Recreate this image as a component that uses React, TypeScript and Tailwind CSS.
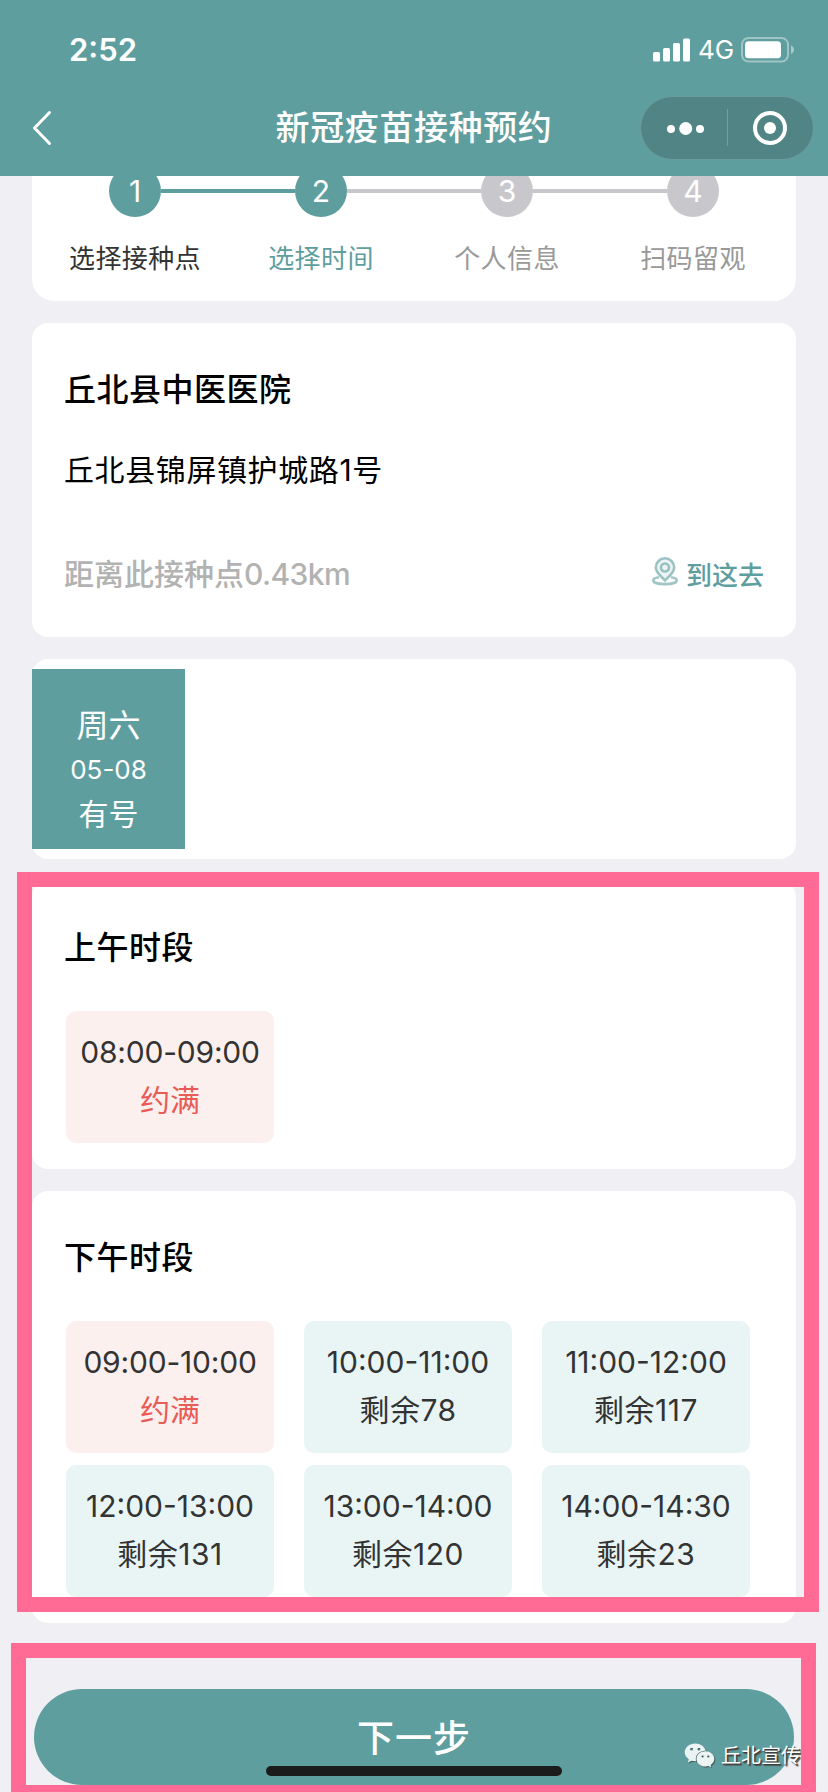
import React from 'react';
import clsx from 'clsx';
import { FaWeixin } from 'react-icons/fa';

interface Step {
  id: number;
  label: string;
}

interface Slot {
  time: string;
  left: number;
}

const CURRENT_STEP = 2;

const steps: Step[] = [
  { id: 1, label: '选择接种点' },
  { id: 2, label: '选择时间' },
  { id: 3, label: '个人信息' },
  { id: 4, label: '扫码留观' },
];

const morning: Slot[] = [{ time: '08:00-09:00', left: 0 }];

const afternoon: Slot[] = [
  { time: '09:00-10:00', left: 0 },
  { time: '10:00-11:00', left: 78 },
  { time: '11:00-12:00', left: 117 },
  { time: '12:00-13:00', left: 131 },
  { time: '13:00-14:00', left: 120 },
  { time: '14:00-14:30', left: 23 },
];

const StatusBar: React.FC = () => (
  <div className="flex h-[80px] items-center justify-between pt-[20px] pl-[69px] pr-[34px]">
    <span className="text-[31px] leading-[40px] font-semibold">2:52</span>
    <div className="flex items-center">
      <svg width="37" height="24" viewBox="0 0 37 24" fill="currentColor">
        <rect x="0" y="14" width="7" height="9.5" rx="1.6" />
        <rect x="10" y="10" width="7" height="13.5" rx="1.6" />
        <rect x="20" y="5" width="7" height="18.5" rx="1.6" />
        <rect x="30" y="0.5" width="7" height="23" rx="1.6" />
      </svg>
      <span className="ml-[8px] w-[35px] text-[26px] leading-[40px]">4G</span>
      <svg className="ml-[8px]" width="53" height="26" viewBox="0 0 53 26">
        <rect x="1" y="1" width="46" height="23.5" rx="6.5" fill="none" stroke="#fff" strokeOpacity="0.4" strokeWidth="2" />
        <rect x="4" y="4.3" width="36" height="17" rx="3.5" fill="#fff" />
        <path d="M50 8.5c1.8.6 3 2.200 3 4.200s-1.200 3.600-3 4.200z" fill="#fff" fillOpacity="0.45" />
      </svg>
    </div>
  </div>
);

const Header: React.FC = () => (
  <header className="h-[176px] bg-[#5f9e9f] text-white">
    <StatusBar />
    <div className="grid h-[96px] grid-cols-[240px_1fr_240px] items-center pr-[14px]">
      <svg className="ml-[32px]" width="20" height="36" viewBox="0 0 20 36" fill="none" stroke="currentColor" strokeWidth="3" strokeLinecap="round" strokeLinejoin="round">
        <path d="M17.500 2.500L2.500 18l15 15.500" />
      </svg>
      <h1 className="ml-[14px] text-center text-[34px] leading-[48px] font-medium tracking-[0.6px] whitespace-nowrap">新冠疫苗接种预约</h1>
      <div className="flex h-[64px] w-[174px] items-center justify-self-end rounded-full border border-[#6b9c9c] bg-[#518585]">
        <svg width="172" height="62" viewBox="0 0 172 62">
          <circle cx="30" cy="32" r="4" fill="#fff" />
          <circle cx="44.700" cy="31.500" r="6.500" fill="#fff" />
          <circle cx="59" cy="32" r="4" fill="#fff" />
          <rect x="86" y="12" width="1" height="37" fill="#759f9f" />
          <circle cx="129" cy="31" r="15" fill="none" stroke="#fff" strokeWidth="4" />
          <circle cx="129" cy="31" r="6" fill="#fff" />
        </svg>
      </div>
    </div>
  </header>
);

const StepBar: React.FC = () => (
  <section className="h-[125px] overflow-hidden rounded-b-[22px] bg-white px-[10px]">
    <div className="-mt-[11px] grid grid-cols-4">
      {steps.map((step, i) => (
        <div key={step.id} className="flex flex-col items-center">
          <div className="flex w-full items-center">
            <div className={clsx('h-[4px] flex-1', i > 0 && (step.id <= CURRENT_STEP ? 'bg-[#5f9e9f]' : 'bg-[#c8c7cc]'))} />
            <div
              className={clsx(
                'flex size-[52px] items-center justify-center rounded-full text-[30px] leading-[24px] text-white',
                step.id <= CURRENT_STEP ? 'bg-[#5f9e9f]' : 'bg-[#c8c7cc]'
              )}
            >
              {step.id}
            </div>
            <div className={clsx('h-[4px] flex-1', i < steps.length - 1 && (step.id < CURRENT_STEP ? 'bg-[#5f9e9f]' : 'bg-[#c8c7cc]'))} />
          </div>
          <p
            className={clsx(
              'mt-[22px] text-[26px] leading-[40px] tracking-[0.4px]',
              step.id < CURRENT_STEP && 'text-[#333]',
              step.id === CURRENT_STEP && 'text-[#5f9e9f]',
              step.id > CURRENT_STEP && 'text-[#999]'
            )}
          >
            {step.label}
          </p>
        </div>
      ))}
    </div>
  </section>
);

const PinIcon: React.FC = () => (
  <svg width="26" height="29" viewBox="0 0 26 29" fill="none" stroke="#5f9e9f" strokeOpacity="0.6" strokeWidth="2.6">
    <path d="M13 23.500C10 20 3.800 16 3.800 10.500a9.200 9.200 0 0 1 18.400 0C22.200 16 16 20 13 23.500z" fill="#5f9e9f" fillOpacity="0.12" />
    <circle cx="13" cy="10.500" r="4" />
    <path d="M7 20.300c-3.600.5-5.700 1.700-5.700 3.100 0 2 4.700 3.700 11.700 3.700s11.700-1.700 11.700-3.700c0-1.400-2.100-2.600-5.700-3.100" />
  </svg>
);

const ClinicCard: React.FC = () => (
  <section className="h-[314px] rounded-[16px] bg-white pt-[43px] pr-[32px] pl-[32px] text-black">
    <h2 className="text-[32px] leading-[48px] font-medium tracking-[0.5px]">丘北县中医医院</h2>
    <p className="mt-[32px] text-[30px] leading-[48px] tracking-[0.6px]">丘北县锦屏镇护城路1号</p>
    <div className="mt-[56px] flex items-center justify-between">
      <p className="text-[30px] leading-[48px] font-medium text-[#b2b2b2]">
        距离此接种点<span className="tracking-[-0.6px]">0.43km</span>
      </p>
      <div className="flex items-center">
        <div className="mb-[6px]">
          <PinIcon />
        </div>
        <span className="mt-[4px] ml-[8px] text-[26px] leading-[40px] font-medium text-[#5f9e9f]">到这去</span>
      </div>
    </div>
  </section>
);

const DateCard: React.FC = () => (
  <section className="h-[200px] rounded-[16px] bg-white py-[10px]">
    <div className="flex h-[180px] w-[153px] flex-col items-center bg-[#5f9e9f] pt-[35px] text-white">
      <span className="text-[32px] leading-[44px]">周六</span>
      <span className="text-[26px] leading-[44px]">05-08</span>
      <span className="text-[30px] leading-[44px]">有号</span>
    </div>
  </section>
);

const SlotCard: React.FC<{ title: string; slots: Slot[] }> = ({ title, slots }) => (
  <section className="rounded-[16px] bg-white pt-[43px] pb-[26px] pl-[34px]">
    <h2 className="-ml-[2px] text-[32px] leading-[48px] font-medium tracking-[0.5px] text-black">{title}</h2>
    <div className="mt-[39px] grid grid-cols-[208px_208px_208px] gap-x-[30px] gap-y-[12px]">
      {slots.map((slot) => (
        <div
          key={slot.time}
          className={clsx(
            'h-[132px] rounded-[10px] pt-[17px] text-center text-[30px] leading-[48px] text-[#333]',
            slot.left > 0 ? 'bg-[#e9f5f5]' : 'bg-[#fcf0ee]'
          )}
        >
          <p className={clsx('whitespace-nowrap', slot.left === 0 && 'tracking-[-0.2px]')}>{slot.time}</p>
          {slot.left > 0 ? <p className="tracking-[0.5px]">剩余{slot.left}</p> : <p className="text-[#e85b57]">约满</p>}
        </div>
      ))}
    </div>
  </section>
);

const App: React.FC = () => {
  return (
    <div className="relative h-[1792px] w-[828px] overflow-hidden bg-[#efeff4] font-['Inter','Noto_Sans_CJK_SC',sans-serif]">
      <Header />
      <main className="flex flex-col gap-[22px] px-[32px]">
        <StepBar />
        <ClinicCard />
        <DateCard />
        <SlotCard title="上午时段" slots={morning} />
        <SlotCard title="下午时段" slots={afternoon} />
      </main>
      <footer className="mt-[66px] px-[34px]">
        <button className="h-[96px] w-full rounded-full bg-[#5f9e9f] pt-[3px] text-[37px] leading-[93px] font-medium tracking-[1px] text-white">
          下一步
        </button>
      </footer>

      {/* Indicador de inicio */}
      <div className="absolute top-[1766px] left-[266px] h-[10px] w-[296px] rounded-full bg-[#1b1b1b]" />

      {/* Marca de la cuenta */}
      <div className="absolute top-[1740px] left-[684px] flex items-center text-white">
        <FaWeixin className="h-[31px] w-[31px] text-[#ebf4f3] drop-shadow-[1px_1px_0_rgba(50,60,60,0.7)]" />
        <span className="ml-[6px] text-[20px] leading-[30px] whitespace-nowrap [text-shadow:1px_1px_1px_#333,2px_2px_1px_#555]">丘北宣传</span>
      </div>

      {/* Recuadros resaltados */}
      <div className="absolute top-[872px] left-[17px] h-[740px] w-[802px] border-[15px] border-[#ff6b95]" />
      <div className="absolute top-[1643px] left-[11px] h-[157px] w-[805px] border-[15px] border-[#ff6b95]" />
    </div>
  );
};

export default App;
